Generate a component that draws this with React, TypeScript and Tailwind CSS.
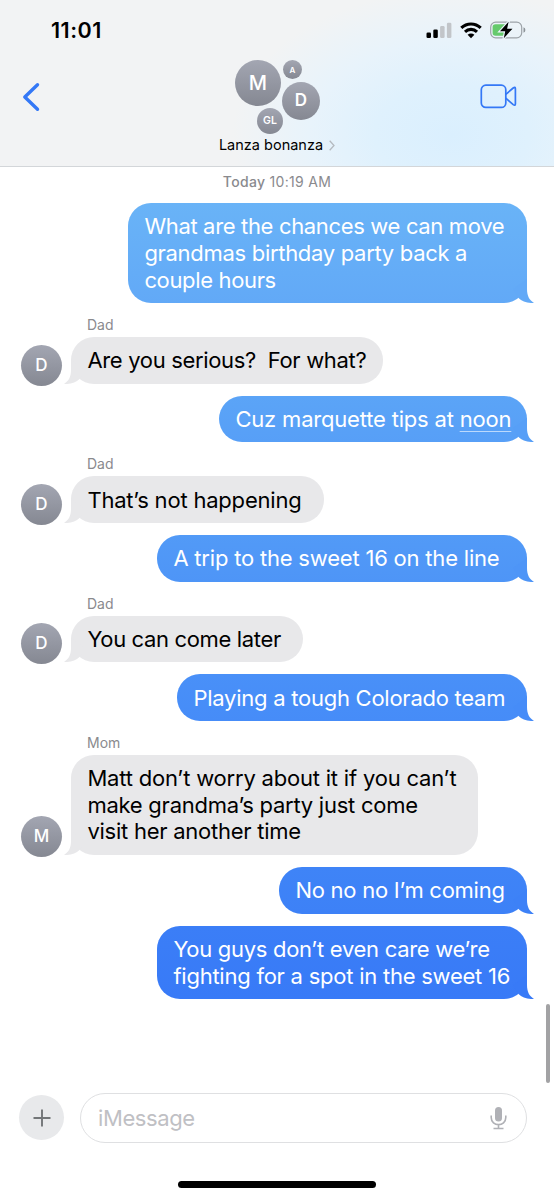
import React from 'react';
import { clsx } from 'clsx';

interface Line {
  text: string;
  tracking: string;
  link?: string;
}

interface Message {
  from?: string;
  lines: Line[];
  width: string;
  spacing: string;
  color: string;
  tail: string;
}

const messages: Message[] = [
  {
    lines: [
      { text: 'What are the chances we can move', tracking: 'tracking-[-0.34px]' },
      { text: 'grandmas birthday party back a', tracking: 'tracking-[-0.3px]' },
      { text: 'couple hours', tracking: 'tracking-[-0.35px]' },
    ],
    width: 'w-[399px]',
    spacing: 'mt-[11px]',
    color: 'bg-linear-to-b from-[#69b3f7] to-[#62a9f7]',
    tail: 'text-[#62a9f7]',
  },
  {
    from: 'Dad',
    lines: [{ text: 'Are you serious?  For what?', tracking: 'tracking-[-0.33px]' }],
    width: 'w-[312px]',
    spacing: 'mt-[13px]',
    color: 'bg-[#e8e8ea]',
    tail: 'text-[#e8e8ea]',
  },
  {
    lines: [{ text: 'Cuz marquette tips at ', link: 'noon', tracking: 'tracking-[-0.19px]' }],
    width: 'w-[308px]',
    spacing: 'mt-[12px]',
    color: 'bg-linear-to-b from-[#5ba4f7] to-[#579ff7]',
    tail: 'text-[#579ff7]',
  },
  {
    from: 'Dad',
    lines: [{ text: 'That’s not happening', tracking: 'tracking-[-0.2px]' }],
    width: 'w-[253px]',
    spacing: 'mt-[13px]',
    color: 'bg-[#e8e8ea]',
    tail: 'text-[#e8e8ea]',
  },
  {
    lines: [{ text: 'A trip to the sweet 16 on the line', tracking: 'tracking-[-0.2px]' }],
    width: 'w-[370px]',
    spacing: 'mt-[12px]',
    color: 'bg-linear-to-b from-[#529af7] to-[#4e95f7]',
    tail: 'text-[#4e95f7]',
  },
  {
    from: 'Dad',
    lines: [{ text: 'You can come later', tracking: 'tracking-[-0.35px]' }],
    width: 'w-[232px]',
    spacing: 'mt-[13px]',
    color: 'bg-[#e8e8ea]',
    tail: 'text-[#e8e8ea]',
  },
  {
    lines: [{ text: 'Playing a tough Colorado team', tracking: 'tracking-[-0.25px]' }],
    width: 'w-[350px]',
    spacing: 'mt-[12px]',
    color: 'bg-linear-to-b from-[#4990f8] to-[#468cf8]',
    tail: 'text-[#468cf8]',
  },
  {
    from: 'Mom',
    lines: [
      { text: 'Matt don’t worry about it if you can’t', tracking: 'tracking-[-0.2px]' },
      { text: 'make grandma’s party just come', tracking: 'tracking-[-0.25px]' },
      { text: 'visit her another time', tracking: 'tracking-[-0.25px]' },
    ],
    width: 'w-[407px]',
    spacing: 'mt-[13px]',
    color: 'bg-[#e8e8ea]',
    tail: 'text-[#e8e8ea]',
  },
  {
    lines: [{ text: 'No no no I’m coming', tracking: 'tracking-[-0.26px]' }],
    width: 'w-[248px]',
    spacing: 'mt-[12px]',
    color: 'bg-linear-to-b from-[#3f84f7] to-[#3d81f7]',
    tail: 'text-[#3d81f7]',
  },
  {
    lines: [
      { text: 'You guys don’t even care we’re', tracking: 'tracking-[-0.3px]' },
      { text: 'fighting for a spot in the sweet 16', tracking: 'tracking-[-0.24px]' },
    ],
    width: 'w-[370px]',
    spacing: 'mt-[12px]',
    color: 'bg-linear-to-b from-[#3b7ef7] to-[#387af7]',
    tail: 'text-[#387af7]',
  },
];

const Avatar = ({ label, className }: { label: string; className: string }) => (
  <div
    className={clsx(
      'flex items-center justify-center rounded-full bg-linear-to-b from-[#a3a6b2] to-[#858892] text-white',
      className
    )}
  >
    {label}
  </div>
);

const Bubble = ({ message }: { message: Message }) => {
  const sent = !message.from;

  return (
    <div
      className={clsx(
        'relative rounded-[23px] pt-[10.3px] pb-[9.7px] pl-[16.4px] text-[22px] leading-[26.7px] whitespace-pre',
        message.width,
        message.color,
        sent ? 'text-white' : 'text-black'
      )}
    >
      <svg
        viewBox="0 0 24 24"
        className={clsx(
          'absolute bottom-0 size-6',
          message.tail,
          sent ? '-right-2' : '-left-2 -scale-x-100'
        )}
      >
        <path
          d="M16 0V10C16 17 18.5 21.5 23 23.7C16.5 24.6 11 22.5 7.5 19L2 10Z"
          fill="currentColor"
        />
      </svg>
      {message.lines.map((line) => (
        <div key={line.text} className={clsx('relative', line.tracking)}>
          {line.text}
          {line.link && (
            <span className="underline decoration-white/60 decoration-1 underline-offset-[4px]">
              {line.link}
            </span>
          )}
        </div>
      ))}
    </div>
  );
};

const StatusIcons = () => (
  <div className="flex items-center">
    {/* Signal */}
    <svg width="26" height="17" viewBox="0 0 26 17">
      <rect x="0.5" y="10.5" width="4.5" height="5.5" rx="1.3" />
      <rect x="7.3" y="7.5" width="4.5" height="8.5" rx="1.3" />
      <rect x="14.1" y="4" width="4.5" height="12" rx="1.3" fill="#c2c5c9" />
      <rect x="20.9" y="0.7" width="4.5" height="15.3" rx="1.3" fill="#c2c5c9" />
    </svg>
    {/* Wifi */}
    <svg width="22" height="17" viewBox="0 0 22 17" className="ml-2" fill="none" stroke="black" strokeWidth="3.1">
      <path d="M1.3 5.9C6.8 .6 15.2 .6 20.7 5.9" />
      <path d="M5 9.8C8.4 6.6 13.6 6.6 17 9.8" />
      <path d="M11 16.2L7.6 12.8C9.5 11.2 12.5 11.2 14.4 12.8Z" fill="black" stroke="none" />
    </svg>
    {/* Battery */}
    <svg width="36" height="20" viewBox="0 0 36 20" className="ml-2">
      <rect x="0.7" y="2.2" width="31" height="15.6" rx="5" fill="none" stroke="#9da3a8" strokeWidth="1.2" />
      <path d="M5.5 4.2H15V15.8H5.5Q2.6 15.8 2.6 13V7Q2.6 4.2 5.5 4.2Z" fill="#65ca6c" />
      <path d="M33.5 7.3Q35.4 8 35.4 10T33.5 12.7Z" fill="#8d9399" />
      <path d="M18.6 1.8L10 11.2H15.2L13.8 18.2L22.5 8.7H17.1Z" stroke="#ecf5fb" strokeWidth="2.4" />
      <path d="M18.6 1.8L10 11.2H15.2L13.8 18.2L22.5 8.7H17.1Z" />
    </svg>
  </div>
);

const Header = () => (
  <header className="h-[167px] shrink-0 border-b border-[#d3d6d9] bg-[#f2f3f4] bg-[radial-gradient(ellipse_220px_145px_at_452px_135px,#daeffe_0%,#dff1fd_35%,#e8f3fb_65%,#f2f3f400_100%)]">
    <div className="flex h-[60px] items-center justify-between pr-[28px] pl-[51px]">
      <span className="text-[21.5px] font-semibold tracking-[0.5px]">11:01</span>
      <StatusIcons />
    </div>
    <div className="flex pl-[22px]">
      <svg width="18" height="30" viewBox="0 0 18 30" className="mt-[22px]" fill="none" stroke="#3478f6" strokeWidth="3.4" strokeLinecap="round" strokeLinejoin="round">
        <path d="M15.5 2.8L2.8 15L15.5 27.2" />
      </svg>
      <div className="ml-[178px] flex w-[120px] flex-col items-center">
        <div className="relative h-[74px] w-[86px]">
          <Avatar label="M" className="absolute top-0 left-0 size-[46px] text-[20px] font-medium" />
          <Avatar label="A" className="absolute top-0 left-[48px] size-[19px] text-[8px] font-semibold" />
          <Avatar label="D" className="absolute top-[22px] left-[47px] size-[38px] text-[17px] font-semibold" />
          <Avatar label="GL" className="absolute top-[48px] left-[22px] size-[26px] text-[10.5px] font-semibold" />
        </div>
        <div className="-ml-[2px] flex items-center text-[14.5px] leading-[22px] whitespace-nowrap">
          <span>Lanza bonanza</span>
          <svg width="6" height="11" viewBox="0 0 6 11" className="ml-[6px]" fill="none" stroke="#b5bac0" strokeWidth="1.3">
            <path d="M0.7 0.8L5 5.5L0.7 10.2" />
          </svg>
        </div>
      </div>
      <svg width="37" height="25" viewBox="0 0 37 25" className="mt-6 mr-[37px] ml-auto" fill="none" stroke="#3478f6" strokeWidth="1.7" strokeLinejoin="round">
        <rect x="1.3" y="1.2" width="24.5" height="22.2" rx="4.5" />
        <path d="M25.8 10.4L33.2 4Q35.4 2.4 35.4 4.8V19.8Q35.4 22.2 33.2 20.6L25.8 14.2" />
      </svg>
    </div>
  </header>
);

const Composer = () => (
  <div className="mt-[94px] flex items-center pl-[19px]">
    <div className="flex size-[45px] items-center justify-center rounded-full bg-[#e8e9eb]">
      <svg width="18" height="18" viewBox="0 0 18 18" stroke="#737678" strokeWidth="1.9">
        <path d="M0.5 9H17.5M9 0.5V17.5" />
      </svg>
    </div>
    <div className="ml-4 flex h-[50px] w-[447px] items-center justify-between rounded-full border-[1.5px] border-[#dfe0e2] pr-[19px] pl-[17px]">
      <span className="mt-[2px] text-[22px] tracking-[-0.4px] text-[#bfc0c4]">iMessage</span>
      <svg width="17" height="24" viewBox="0 0 17 24" fill="none" stroke="#b0b1b6" strokeWidth="1.6">
        <rect x="5" y="1" width="7" height="14.5" rx="3.5" fill="#b0b1b6" stroke="none" />
        <path d="M1.2 9.5V11.5C1.2 21 15.8 21 15.8 11.5V9.5M8.5 18.5V22.3M3.5 22.5H13.5" />
      </svg>
    </div>
  </div>
);

export default function App() {
  return (
    <div className="relative flex h-[1200px] w-[554px] flex-col overflow-hidden bg-white font-['Inter',sans-serif] text-black">
      <Header />

      <main className="flex flex-col">
        <div className="mt-[5px] text-center text-[14px] leading-5 tracking-[0.3px] text-[#8a8a8e]">
          <span className="font-medium">Today</span> 10:19 AM
        </div>

        {messages.map((message, index) =>
          message.from ? (
            <div key={index} className={clsx('pl-[21px]', message.spacing)}>
              <div className="pl-[66px] text-[14px] leading-[18px] text-[#8a8a8e]">{message.from}</div>
              <div className="mt-[2.9px] flex items-end">
                <Avatar label={message.from[0]} className="mr-[9px] -mb-[2px] size-[41px] pt-px text-[17px] font-medium" />
                <Bubble message={message} />
              </div>
            </div>
          ) : (
            <div key={index} className={clsx('flex justify-end pr-[27px]', message.spacing)}>
              <Bubble message={message} />
            </div>
          )
        )}
      </main>

      <Composer />

      {/* Home indicator */}
      <div className="mt-[38px] h-[7px] w-[198px] self-center rounded-full bg-black" />

      {/* Scroll thumb */}
      <div className="absolute top-[1004px] right-[4px] h-[79px] w-[4px] rounded-full bg-[#a2a2a4]" />
    </div>
  );
}
